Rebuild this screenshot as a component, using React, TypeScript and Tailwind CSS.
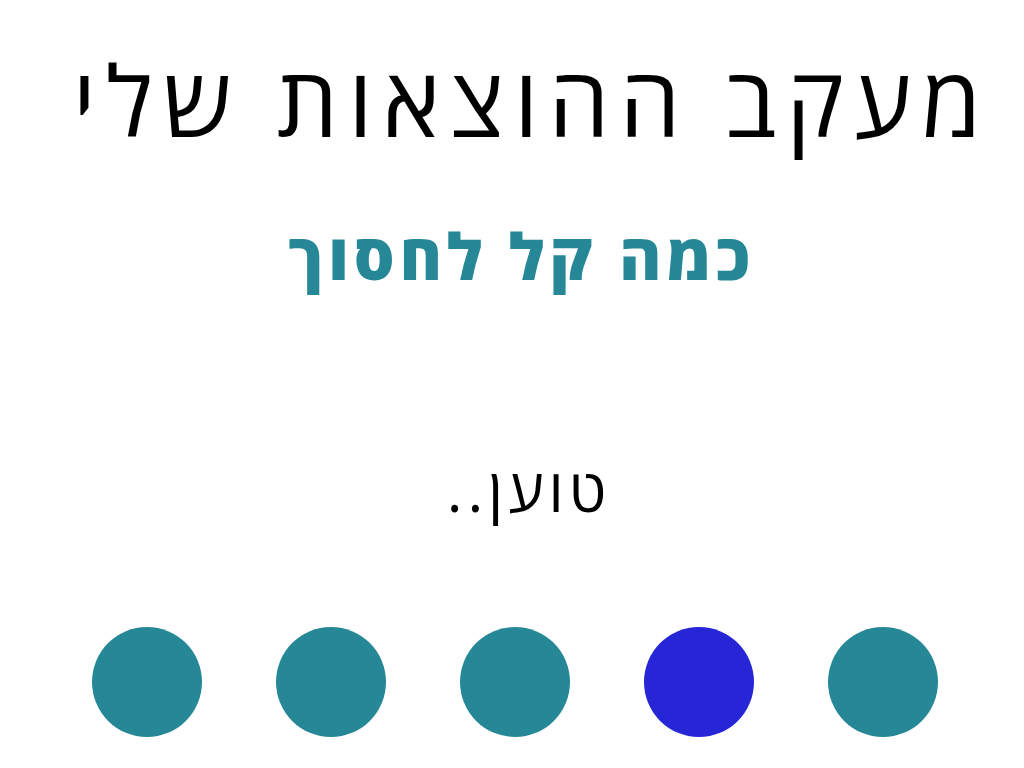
export default function App() {
  const dots = ['#268896', '#2626d6', '#268896', '#268896', '#268896']
  return (
    <div dir="rtl" className="bg-white w-[1024px] h-[768px] overflow-hidden flex flex-col items-center" style={{ fontFamily: '"Open Sans", "Noto Sans", sans-serif' }}>
      <h1 className="mt-[39px] ml-[40px] text-[97px] leading-[120px] tracking-[10px] text-black font-normal">מעקב ההוצאות שלי</h1>
      <h2 className="mt-[57px] ml-[20px] text-[64px] leading-[80px] tracking-[5px] font-extrabold text-[#268896]">כמה קל לחסוך</h2>
      <p className="mt-[155px] ml-[34px] text-[60px] leading-[76px] tracking-[5px] text-black">טוען..</p>
      <div className="mt-[100px] ml-[5px] flex gap-[74px]">
        {dots.map((c, i) => (
          <div key={i} className="w-[110px] h-[110px] rounded-full" style={{ backgroundColor: c }} />
        ))}
      </div>
    </div>
  )
}
